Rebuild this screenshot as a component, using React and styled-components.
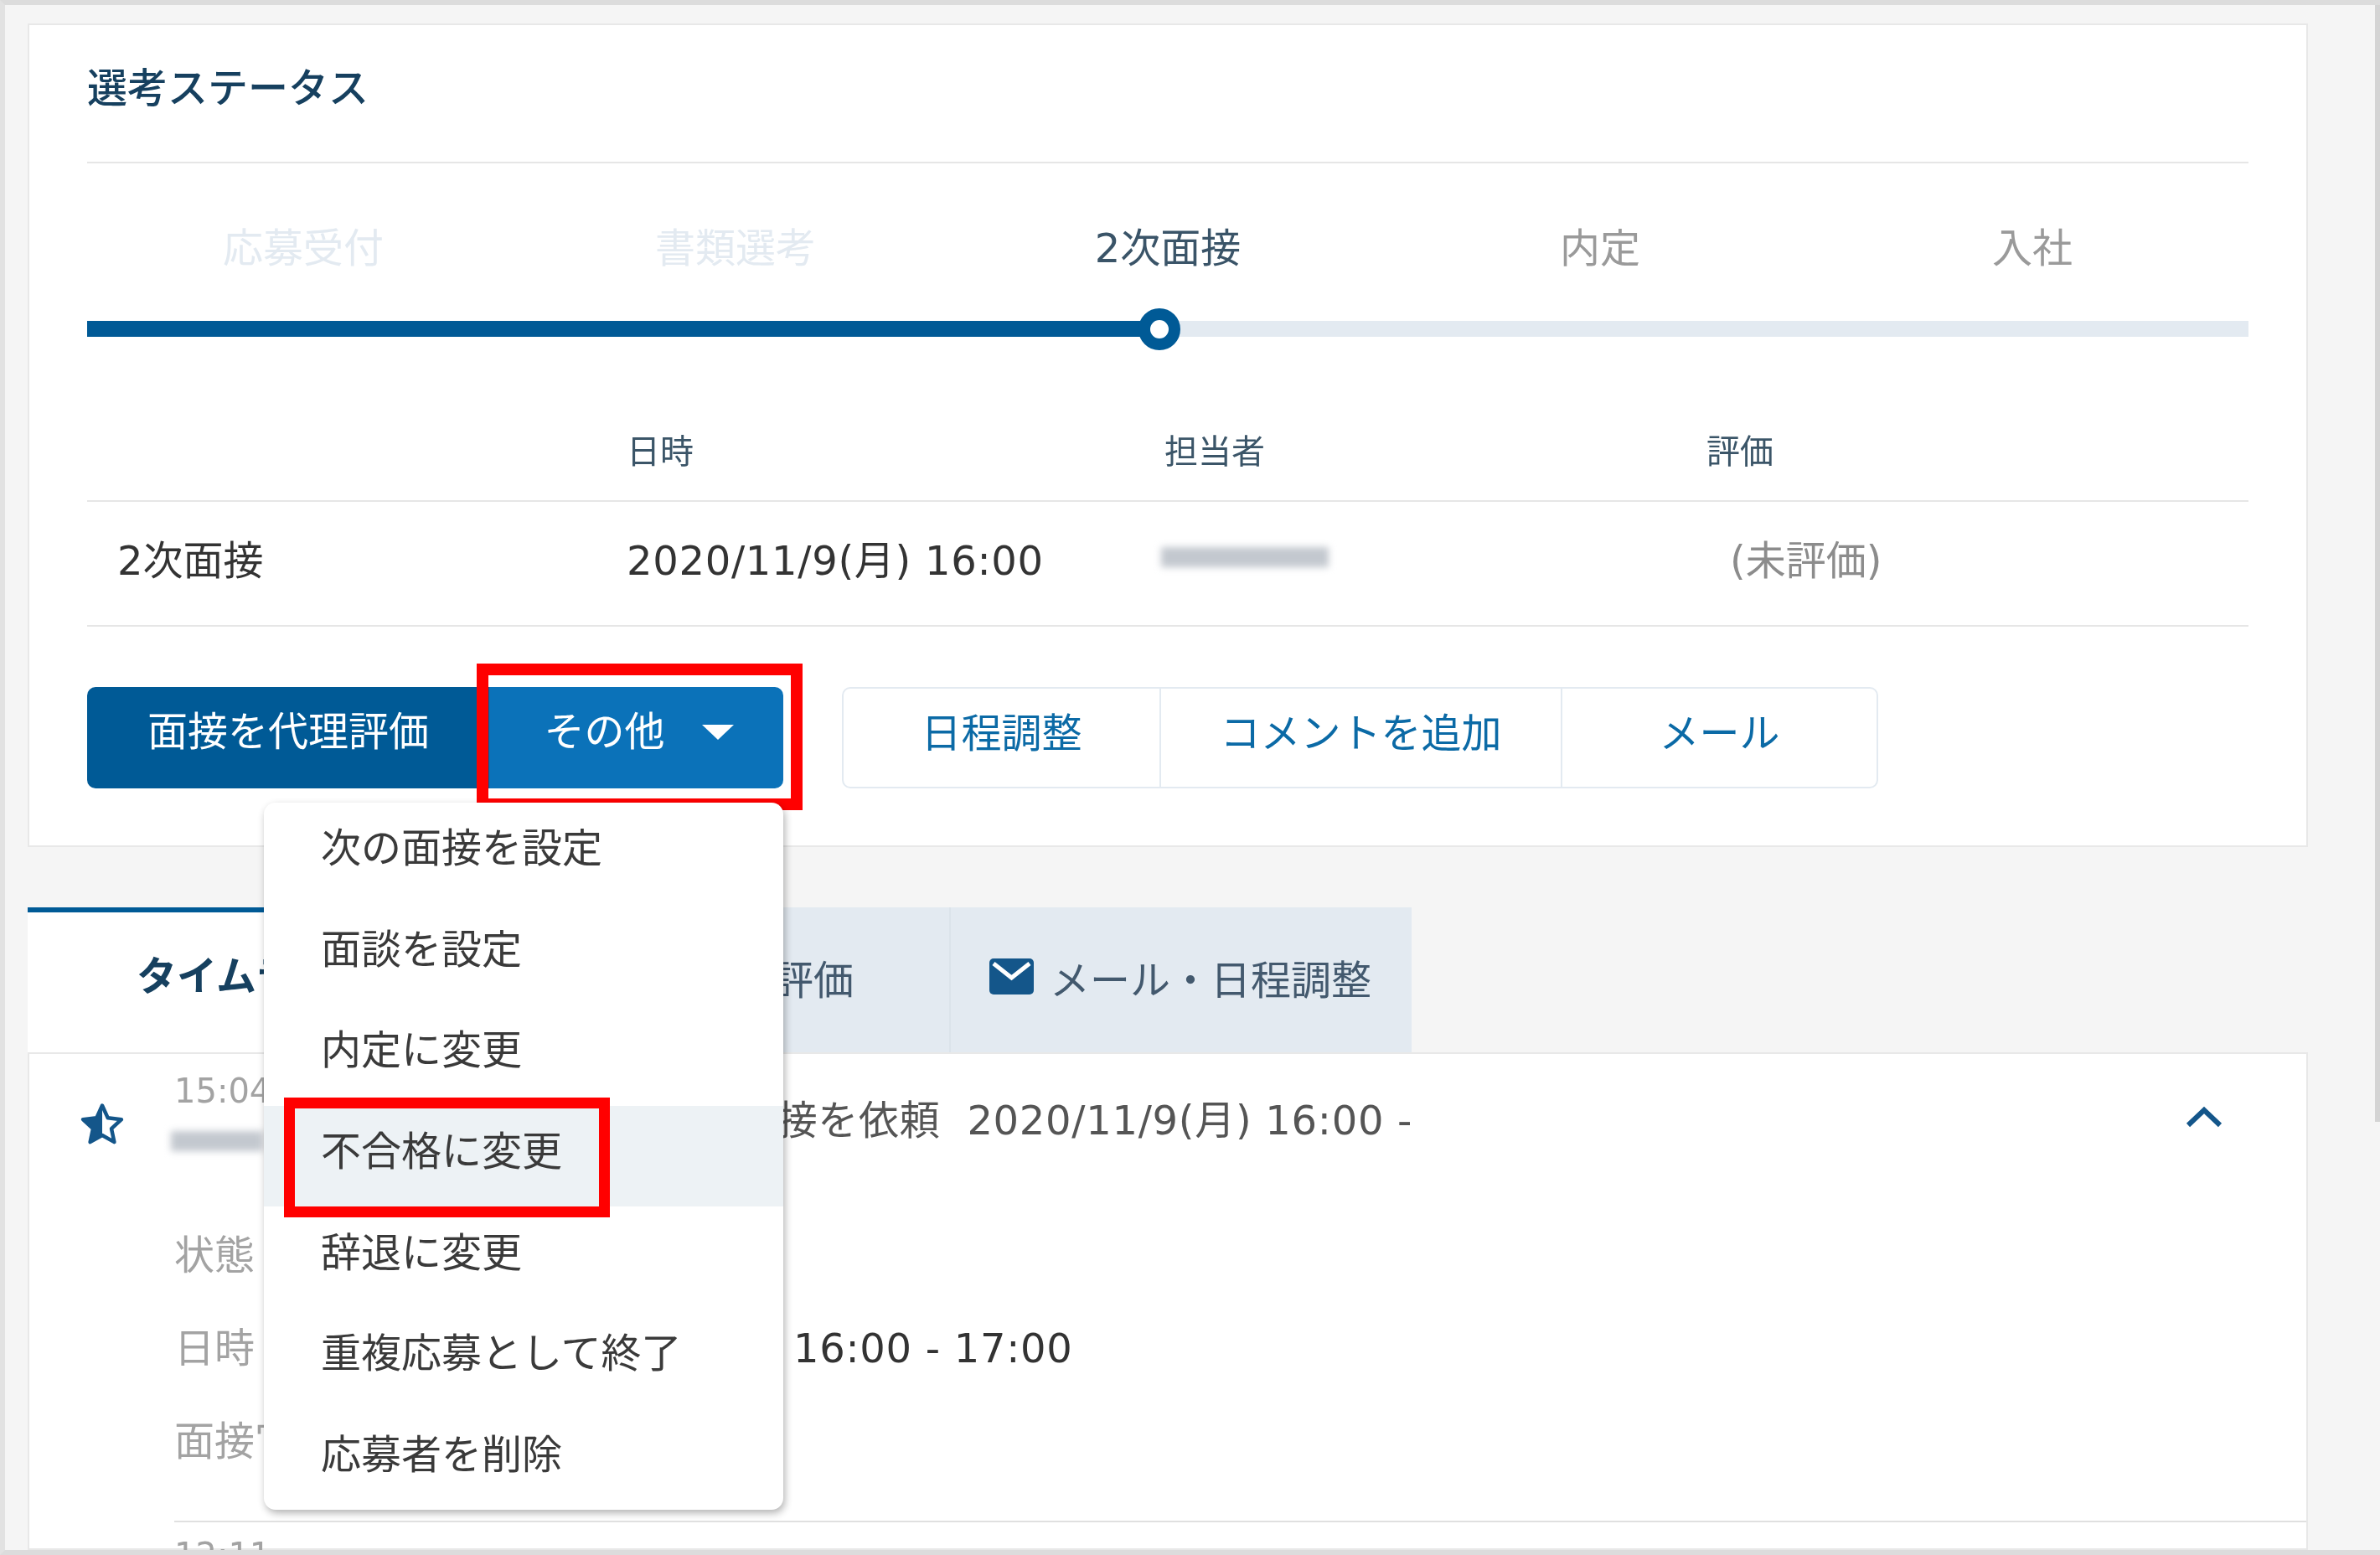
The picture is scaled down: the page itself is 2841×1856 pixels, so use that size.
import React from "react";
import styled, { createGlobalStyle } from "styled-components";

const GlobalStyle = createGlobalStyle`
  html, body {
    margin: 0;
    padding: 0;
    background: #f5f5f5;
  }
  * {
    box-sizing: border-box;
  }
`;

const Frame = styled.div`
  position: relative;
  width: 2841px;
  height: 1856px;
  overflow: hidden;
  display: flex;
  flex-direction: column;
  padding: 22px 86px 0 27px;
  background: #f5f5f5;
  border-top: 6px solid #dcdcdc;
  border-left: 6px solid #e2e2e2;
  border-bottom: 6px solid #dcdcdc;
  font-family: "DejaVu Sans", "Noto Sans CJK JP", sans-serif;
  font-size: 48px;
  color: #333;
  filter: blur(0.7px);
`;

const ScrollThumb = styled.div`
  position: absolute;
  top: 0;
  right: 0;
  width: 6px;
  height: 1333px;
  background: #d4d4d4;
`;

const Card = styled.section`
  flex: none;
  height: 983px;
  padding: 0 69px;
  background: #fff;
  border: 2px solid #e8e8e8;
`;

const CardTitle = styled.h2`
  margin: 0;
  height: 165px;
  padding-bottom: 21px;
  display: flex;
  align-items: center;
  font-family: "Noto Sans CJK JP", sans-serif;
  font-size: 48px;
  font-weight: 500;
  color: #16405f;
  border-bottom: 2px solid #e6e6e6;
`;

const Steps = styled.div`
  display: grid;
  grid-template-columns: repeat(5, 1fr);
  margin-top: 71px;
  line-height: 60px;
  text-align: center;
`;

const Step = styled.div`
  color: ${(p) =>
    p.$state === "done" ? "#e3eaf1" : p.$state === "current" ? "#3a5468" : "#9a9a9a"};
`;

const Track = styled.div`
  position: relative;
  height: 19px;
  margin-top: 57px;
  background: #e3eaf1;
`;

const TrackFill = styled.div`
  height: 100%;
  background: #005a96;
`;

const Knob = styled.div`
  position: absolute;
  top: 50%;
  width: 50px;
  height: 50px;
  transform: translate(-50%, -50%);
  background: #fff;
  border: 14px solid #005a96;
  border-radius: 50%;
`;

const Row = styled.div`
  display: grid;
  grid-template-columns: 644px 642px 647px 1fr;
  align-items: center;
  border-bottom: 2px solid #e6e6e6;
`;

const HeadRow = styled(Row)`
  margin-top: 107px;
  padding-bottom: 28px;
  line-height: 60px;
  font-size: 40px;
  color: #3b5568;
`;

const BodyRow = styled(Row)`
  height: 149px;
  padding-bottom: 16px;
`;

const SubjectCell = styled.div`
  padding-left: 36px;
`;

const MutedCell = styled.div`
  padding-left: 28px;
  color: #8c8c8c;
`;

const DateText = styled.span`
  letter-spacing: 0.7px;
`;

const BlurName = styled.div`
  width: ${(p) => p.$width}px;
  height: 24px;
  margin-left: -4px;
  background: #c3c8cf;
  filter: blur(4px);
`;

const Actions = styled.div`
  display: flex;
  margin-top: 72px;
  height: 121px;
`;

const PrimaryGroup = styled.div`
  display: flex;
  position: relative;
`;

const PrimaryButton = styled.button`
  display: flex;
  align-items: center;
  justify-content: center;
  gap: 44px;
  width: ${(p) => p.$width}px;
  height: 100%;
  padding: 0 0 24px ${(p) => (p.$accent ? 6 : 0)}px;
  border: none;
  border-radius: ${(p) => (p.$accent ? "0 10px 10px 0" : "10px 0 0 10px")};
  background: ${(p) => (p.$accent ? "#0b72b9" : "#005a96")};
  color: #fff;
  font: inherit;
`;

const Caret = styled.span`
  width: 0;
  height: 0;
  margin-top: 10px;
  border-left: 19px solid transparent;
  border-right: 19px solid transparent;
  border-top: 18px solid #fff;
`;

const SecondaryGroup = styled.div`
  display: flex;
  margin-left: 70px;
  border: 2px solid #e3eaf1;
  border-radius: 10px;
  background: #fff;
`;

const SecondaryButton = styled.button`
  width: ${(p) => p.$width}px;
  padding: 0 0 20px;
  border: none;
  border-left: ${(p) => (p.$first ? "none" : "2px solid #e3eaf1")};
  background: transparent;
  color: #0b6aa6;
  font: inherit;
`;

const RedBox = styled.div`
  position: absolute;
  border: solid #f00;
  border-width: ${(p) => p.$line}px;
  pointer-events: none;
`;

const Tabs = styled.div`
  display: flex;
  flex: none;
  height: 173px;
  margin-top: 72px;
`;

const ActiveTab = styled.div`
  width: 548px;
  padding: 42px 0 0 130px;
  line-height: 60px;
  background: #fff;
  border-top: 6px solid #005a96;
  color: #16405f;
  font-weight: 700;
  font-family: "Noto Sans CJK JP", sans-serif;
`;

const Tab = styled.div`
  display: flex;
  align-items: center;
  gap: 19px;
  width: ${(p) => p.$width}px;
  padding: 0 0 8px ${(p) => p.$pad}px;
  background: #e3eaf1;
  border-left: 2px solid #dbe3ea;
  color: #43596e;
`;

const Panel = styled.section`
  flex: 1;
  min-height: 0;
  display: flex;
  gap: 59px;
  padding: 0 0 0 60px;
  background: #fff;
  border: 2px solid #e8e8e8;
`;

const StarWrap = styled.div`
  flex: none;
  width: 54px;
  height: 54px;
  margin-top: 57px;
`;

const Entry = styled.div`
  flex: 1;
  min-width: 0;
`;

const EntryHead = styled.div`
  display: flex;
  height: 210px;
  padding: 15px 100px 0 0;
`;

const EntryMeta = styled.div`
  width: 591px;
  color: #a3a3a3;
  font-size: 40px;
  line-height: 58px;
`;

const MetaBlur = styled(BlurName)`
  margin-top: 19px;
`;

const EntryTitle = styled.div`
  flex: 1;
  padding-top: 34px;
  line-height: 60px;
  color: #555;
`;

const Chevron = styled.div`
  flex: none;
  width: 44px;
  padding-top: 28px;
`;

const Detail = styled.div`
  display: grid;
  grid-template-columns: 383px 1fr;
  height: 111px;
  line-height: 60px;
`;

const DetailLabel = styled.div`
  color: #a3a3a3;
`;

const Divider = styled.div`
  margin-top: 14px;
  border-top: 2px solid #e0e0e0;
  padding-top: 10px;
  color: #a3a3a3;
  font-size: 40px;
  line-height: 58px;
`;

const Menu = styled.ul`
  position: absolute;
  left: 309px;
  top: 952px;
  width: 620px;
  height: 844px;
  margin: 0;
  padding: 0;
  list-style: none;
  display: flex;
  flex-direction: column;
  background: #fff;
  border-radius: 14px;
  box-shadow: 2px 4px 10px rgba(0, 0, 0, 0.3);
`;

const MenuItem = styled.li`
  height: 120.6px;
  flex: none;
  display: flex;
  align-items: center;
  padding: 0 0 20px 68px;
  background: ${(p) => (p.$active ? "#edf2f5" : "transparent")};
  color: #3a3a3a;
`;

const steps = [
  { label: "応募受付", state: "done" },
  { label: "書類選考", state: "done" },
  { label: "2次面接", state: "current" },
  { label: "内定" },
  { label: "入社" },
];

const menuItems = [
  "次の面接を設定",
  "面談を設定",
  "内定に変更",
  "不合格に変更",
  "辞退に変更",
  "重複応募として終了",
  "応募者を削除",
];

const StarIcon = () => (
  <svg width="54" height="54" viewBox="0 0 24 24">
    <path d="M12 2l3 6.6 7.2.8-5.3 4.9 1.5 7.1L12 17.8 5.6 21.4l1.5-7.1L1.800 9.400 9 8.600z" fill="none" stroke="#14568a" strokeWidth="2" strokeLinejoin="round" />
    <path d="M12 2v15.800L5.600 21.400l1.500-7.100L1.800 9.400 9 8.600z" fill="#14568a" />
  </svg>
);

const MailIcon = () => (
  <svg width="53" height="43" viewBox="0 0 53 43">
    <rect width="53" height="43" rx="5" fill="#14568a" />
    <path d="M5 6l21.500 17L48 6" fill="none" stroke="#fff" strokeWidth="5" />
  </svg>
);

const ChevronUp = () => (
  <svg width="44" height="26" viewBox="0 0 44 26">
    <path d="M3 23L22 5l19 18" fill="none" stroke="#14568a" strokeWidth="6" />
  </svg>
);

export default function App() {
  return (
    <Frame>
      <GlobalStyle />
      <ScrollThumb />
      <Card>
        <CardTitle>選考ステータス</CardTitle>
        <Steps>
          {steps.map((s) => (
            <Step key={s.label} $state={s.state}>
              {s.label}
            </Step>
          ))}
        </Steps>
        <Track>
          <TrackFill style={{ width: `${(1280 / 2580) * 100}%` }} />
          <Knob style={{ left: `${(1280 / 2580) * 100}%` }} />
        </Track>
        <HeadRow>
          <div />
          <div>日時</div>
          <div>担当者</div>
          <div>評価</div>
        </HeadRow>
        <BodyRow>
          <SubjectCell>2次面接</SubjectCell>
          <DateText>2020/11/9(月) 16:00</DateText>
          <BlurName $width={200} />
          <MutedCell>(未評価)</MutedCell>
        </BodyRow>
        <Actions>
          <PrimaryGroup>
            <PrimaryButton $width={480}>面接を代理評価</PrimaryButton>
            <PrimaryButton $width={351} $accent>
              その他
              <Caret />
            </PrimaryButton>
          </PrimaryGroup>
          <SecondaryGroup>
            <SecondaryButton $first $width={377}>日程調整</SecondaryButton>
            <SecondaryButton $width={479}>コメントを追加</SecondaryButton>
            <SecondaryButton $width={377}>メール</SecondaryButton>
          </SecondaryGroup>
        </Actions>
      </Card>
      <Tabs>
        <ActiveTab>タイムライン</ActiveTab>
        <Tab $width={552} $pad={100}>コメント・評価</Tab>
        <Tab $width={552} $pad={46}>
          <MailIcon />
          メール・日程調整
        </Tab>
      </Tabs>
      <Panel>
        <StarWrap>
          <StarIcon />
        </StarWrap>
        <Entry>
          <EntryHead>
            <EntryMeta>
              15:04
              <MetaBlur $width={110} />
            </EntryMeta>
            <EntryTitle>
              <DateText>2次面接を依頼{"\u00a0 "}2020/11/9(月) 16:00 -</DateText>
            </EntryTitle>
            <Chevron>
              <ChevronUp />
            </Chevron>
          </EntryHead>
          <Detail>
            <DetailLabel>状態</DetailLabel>
            <div />
          </Detail>
          <Detail>
            <DetailLabel>日時</DetailLabel>
            <DateText>2020/11/9(月) 16:00 - 17:00</DateText>
          </Detail>
          <Detail>
            <DetailLabel>面接官</DetailLabel>
            <div />
          </Detail>
          <Divider>12:11</Divider>
        </Entry>
      </Panel>
      <RedBox $line={14} style={{ left: 563, top: 786, width: 389, height: 175 }} />
      <Menu>
        {menuItems.map((item, i) => (
          <MenuItem key={item} $active={i === 3}>
            {item}
          </MenuItem>
        ))}
      </Menu>
      <RedBox $line={13} style={{ left: 333, top: 1304, width: 389, height: 143 }} />
    </Frame>
  );
}
